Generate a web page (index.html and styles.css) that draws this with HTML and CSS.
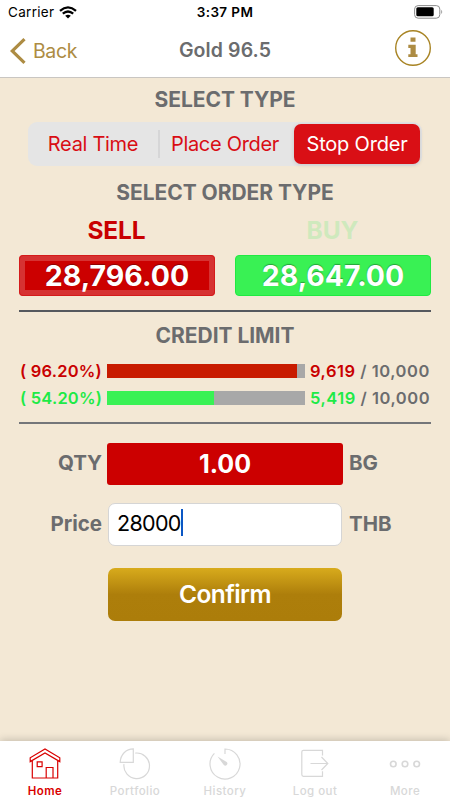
FILE: index.html
```html
<!DOCTYPE html>
<html lang="en">
<head>
<meta charset="utf-8">
<title>Gold 96.5</title>
<link rel="stylesheet" href="styles.css">
</head>
<body>
<header class="top">
  <div class="status">
    <div class="carrier"><span>Carrier</span>
      <svg width="18" height="13" viewBox="0 0 18 13" fill="none" stroke="#000" stroke-width="2.3"><path d="M1 4.8Q9-2 17 4.8M3.8 7.7Q9 3.3 14.2 7.7"/><path d="M6.2 9.8Q9 7.6 11.8 9.8L9 12.6z" fill="#000" stroke="none"/></svg>
    </div>
    <div class="time">3:37 PM</div>
    <svg class="battery" width="29" height="14" viewBox="0 0 29 14"><rect x=".6" y=".6" width="25.2" height="12.6" rx="3.5" fill="none" stroke="#8c8c8c"/><rect x="2.3" y="2.3" width="17.4" height="9" rx="1.5"/><path d="M27.3 4.8q1.8 2.1 0 4.2z" fill="#888"/></svg>
  </div>
  <nav class="nav">
    <div class="back"><svg width="16" height="26" viewBox="0 0 16 26" fill="none" stroke="#ad8c43" stroke-width="3.2"><path d="M14.5 1.2 2.2 13l12.3 11.8"/></svg><span>Back</span></div>
    <h1>Gold 96.5</h1>
    <svg class="info" width="36" height="36" viewBox="0 0 36 36"><circle cx="18" cy="18" r="17.3" fill="none" stroke="#a88424" stroke-width="1.4"/><path d="M15.5 7.5h5v4.3h-5zM13.3 14.8h7.4v9.4h1.8v2.9h-9.2v-2.9h2.2v-6.3h-2.2z" fill="#ad8c43"/></svg>
  </nav>
</header>
<main class="main">
  <h2 class="heading">SELECT TYPE</h2>
  <div class="segments">
    <div class="segment">Real Time</div>
    <div class="divider"></div>
    <div class="segment place">Place Order</div>
    <div class="segment selected">Stop Order</div>
  </div>
  <h2 class="heading order-heading">SELECT ORDER TYPE</h2>
  <section class="quotes">
    <div class="quote"><div class="side sell">SELL</div><div class="price price-sell"><span>28,796.00</span></div></div>
    <div class="quote"><div class="side buy">BUY</div><div class="price price-buy"><span>28,647.00</span></div></div>
  </section>
  <div class="rule rule-dark"></div>
  <h2 class="heading credit-heading">CREDIT LIMIT</h2>
  <section class="limits">
    <div class="limit"><span class="percent sell">( 96.20%)</span><div class="bar"><div class="fill fill-sell" style="width:96.2%"></div></div><span class="amount"><b class="sell">9,619</b> / 10,000</span></div>
    <div class="limit"><span class="percent green">( 54.20%)</span><div class="bar"><div class="fill fill-buy" style="width:54.2%"></div></div><span class="amount"><b class="green">5,419</b> / 10,000</span></div>
  </section>
  <div class="rule"></div>
  <section class="form">
    <div class="field"><span class="label">QTY</span><div class="quantity">1.00</div><span class="unit">BG</span></div>
    <div class="field"><span class="label">Price</span><div class="input"><span>28000</span><i class="caret"></i></div><span class="unit">THB</span></div>
    <div class="confirm">Confirm</div>
  </section>
</main>
<footer class="tabs">
  <div class="tab active"><svg width="32" height="32" viewBox="0 0 32 32"><path d="M1.2 13.6V9.8L16 1l14.8 8.8v3.8L16 4.9zM3.3 12.7V30h25.4V12.7M8.2 13.8h4.9v4.9H8.2zM17.2 30V19.5H24V30"/></svg><span>Home</span></div>
  <div class="tab"><svg width="32" height="32" viewBox="0 0 32 32"><path d="M14.3.9v13.4H1.2C1.4 6.6 7 .9 14.3.9zM16.3 5.1a12.8 12.8 0 1 1-11.3 11"/></svg><span>Portfolio</span></div>
  <div class="tab"><svg width="32" height="32" viewBox="0 0 32 32"><path d="M16 6V1a15 15 0 1 1-10.6 4.4"/><path d="M8.5 8.5 17.7 14a2 2 0 0 1-2.9 3z" fill="#d8d8d8" stroke="none"/></svg><span>History</span></div>
  <div class="tab"><svg width="32" height="32" viewBox="0 0 32 32"><path d="M23.5 7.5V2.4H4.4Q2.8 2.4 2.8 4v22.6q0 1.7 1.6 1.7h19.1v-5M11.5 15.5h17M22.5 9l6.3 6.5-6.3 6.5"/></svg><span>Log out</span></div>
  <div class="tab"><svg width="32" height="32" viewBox="0 0 32 32"><g stroke-width="1.6"><circle cx="4.3" cy="16" r="2.8"/><circle cx="16" cy="16" r="2.8"/><circle cx="27.7" cy="16" r="2.8"/></g></svg><span>More</span></div>
</footer>
</body>
</html>
```
FILE: styles.css
```css
* { box-sizing: border-box; }
body {
  margin: 0;
  height: 800px;
  display: flex;
  flex-direction: column;
  background: #f3e8d5;
  color: #6b6c6e;
  font-family: Inter, "Liberation Sans", sans-serif;
  overflow: hidden;
}
h1, h2 { margin: 0; }
svg { display: block; }
.top { height: 78px; background: #fff; border-bottom: 1px solid #c9c6c2; }
.status { height: 24px; padding: 0 7px 0 8px; display: grid; grid-template-columns: 1fr auto 1fr; align-items: center; color: #000; font-size: 13.5px; }
.carrier { display: flex; gap: 5px; align-items: center; letter-spacing: .3px; }
.time { font-weight: 600; letter-spacing: .4px; margin-right: 1px; }
.battery { justify-self: end; }
.nav { height: 53px; padding: 0 19px 0 10px; display: grid; grid-template-columns: 1fr auto 1fr; align-items: center; }
.back { display: flex; align-items: center; gap: 7px; color: #ad8c43; font-size: 19.5px; letter-spacing: -.4px; }
.nav h1 { font-size: 19.5px; font-weight: 600; letter-spacing: .1px; margin: -1px 0 0 9px; }
.info { justify-self: end; margin-top: -5px; }
.main { flex: 1; padding: 8px 19px 0; }
.heading { height: 26px; line-height: 27px; text-align: center; font-size: 21px; font-weight: 700; letter-spacing: -.05px; }
.segments { margin: 10px 9px 0; height: 44px; padding: 2px; display: grid; grid-template-columns: 128px 2px 134px 126px; align-items: center; border-radius: 9px; background: #e5e5e5; font-size: 20px; letter-spacing: -.3px; color: #d90d14; }
.segment { text-align: center; white-space: nowrap; }
.segment:first-child { padding-right: 2px; }
.place { padding-right: 4px; }
.divider { height: 28px; background: #d6d6d7; }
.selected { height: 40px; line-height: 40px; border-radius: 7px; color: #fff; background: #d90f15; box-shadow: 0 1px 4px #0002; letter-spacing: -.2px; }
.order-heading { margin-top: 13px; }
.quotes { margin-top: 8px; display: grid; grid-template-columns: 196px 196px; gap: 20px; }
.quote { text-align: center; }
.side { height: 42px; line-height: 34px; padding-right: 1px; font-size: 24.5px; font-weight: 700; letter-spacing: -.1px; }
.sell { color: #c90000; }
.buy { color: #cfe9bd; }
.green { color: #1eea47; }
.price { height: 41px; line-height: 41px; border-radius: 4px; color: #fff; font-size: 28.5px; font-weight: 700; text-shadow: 0 -1px 1px #0005; }
.price-sell { background: #c00; border: 6px solid #d63232; line-height: 30px; outline: 1px solid #d41b1b; outline-offset: -1px; }
.price-buy { background: #39f154; border: 1px solid #20e942; line-height: 40px; }
.rule { height: 2px; background: #74767a; }
.rule-dark { margin-top: 14px; background: #55585e; }
.credit-heading { margin-top: 10px; }
.limits { margin: 10px 0 11px; }
.limit { height: 26.5px; display: grid; grid-template-columns: 88px 198px 1fr; align-items: center; font-size: 16.5px; font-weight: 600; letter-spacing: .2px; white-space: nowrap; }
.limit b { font-weight: 600; letter-spacing: .5px; }
.bar { height: 14px; background: #a8a8a8; }
.fill { height: 100%; }
.fill-sell { background: #c81b00; }
.fill-buy { background: #39f154; }
.percent { padding-left: 1px; }
.amount { padding-left: 5px; letter-spacing: .55px; }
.form { padding-top: 18.5px; }
.field { height: 42px; margin-bottom: 18px; display: grid; grid-template-columns: 83px 236px 1fr; column-gap: 5px; align-items: center; font-size: 20.5px; font-weight: 700; }
.label, .unit { position: relative; top: -1px; }
.label { text-align: right; }
.unit { padding-left: 1px; }
.quantity { height: 42px; line-height: 42px; border-radius: 3px; background: #c00; color: #fff; text-align: center; font-size: 25px; }
.input { height: 43px; margin: 0 1px; padding: 0 8px 3px; display: flex; align-items: center; border: 1px solid #d5d5d5; border-radius: 7px; background: #fff; color: #000; font-size: 21.5px; font-weight: 400; letter-spacing: -.7px; }
.caret { width: 2px; height: 27px; background: #0b57c4; }
.confirm { width: 234px; height: 53px; line-height: 53px; margin: 23.5px 0 0 89px; border-radius: 7px; background: linear-gradient(#d8ab1c, #ad7e0b 50%, #ac7d0a); color: #fff; text-align: center; font-size: 24.5px; font-weight: 600; letter-spacing: -.6px; }
.tabs { height: 59px; display: grid; grid-template-columns: repeat(5, 90px); background: #fff; box-shadow: 0 -1px 8px #0003; }
.tab { display: flex; flex-direction: column; align-items: center; padding-top: 7px; color: #d8d8d8; font-size: 11.5px; font-weight: 500; line-height: 14px; letter-spacing: .45px; }
.tab svg { margin-bottom: 4px; fill: none; stroke: currentColor; stroke-width: 1.2; }
.active { color: #d90000; font-weight: 600; }
```
